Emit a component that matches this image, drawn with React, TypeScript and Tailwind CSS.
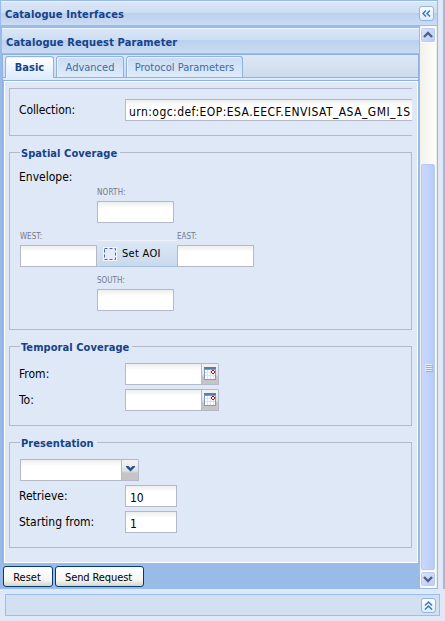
import React from "react";

const line = "border-[#b5b8c8]";
const field =
  "h-[22px] shrink-0 border border-[#b5b8c8] bg-linear-to-b from-[#eceeee] via-white via-30% to-white";
const label = "text-[12px] leading-[14px] text-black whitespace-nowrap";
const tiny = "block h-[9px] text-[8px] leading-[11px] text-[#71798a] whitespace-nowrap";

function Group({ title, className, children }: { title: string; className: string; children: React.ReactNode }) {
  return (
    <fieldset className={`min-w-0 border ${line} w-[403px] pl-[10px] ${className}`}>
      <legend className="h-[13px] pr-[3px] pl-[1px] text-[11px] leading-[15px] font-bold text-[#15428b] whitespace-nowrap tracking-[0.07px]">
        {title}
      </legend>
      {children}
    </fieldset>
  );
}

function Calendar() {
  return (
    <svg width="12" height="13" viewBox="0 0 12 13" shapeRendering="crispEdges" className="mb-px">
      <rect width="12" height="13" fill="#7c9bc9" />
      <rect width="12" height="2" fill="#587eaf" />
      <rect x="1" y="3" width="10" height="9" fill="#fff" />
      <path d="M3.5 3v9M6.5 3v9M9.5 3v9M1 5.5h10M1 8.5h10" stroke="#dfe2ed" />
      <path d="M8 3h2v1h1v2h-1v1h-2v-1h-1v-2h1z" fill="#8e1020" />
      <rect x="8" y="4" width="2" height="2" fill="#fff" />
    </svg>
  );
}

function Trigger({ children }: { children: React.ReactNode }) {
  return (
    <div className="flex h-[22px] w-[17px] items-center justify-center rounded-tr-[2px] border border-l-0 border-[#b5b8c8] bg-linear-to-b from-[#f0f0f0] from-20% via-[#dedfe1] via-55% to-[#c5c5c7] to-65%">
      {children}
    </div>
  );
}

function DateRow({ text }: { text: string }) {
  return (
    <div className="mb-[4px] flex h-[22px]">
      <span className={`${label} -ml-px w-[106px] pt-[4px]`}>{text}</span>
      <div className={`${field} w-[77px]`} />
      <Trigger><Calendar /></Trigger>
    </div>
  );
}

function NumberRow({ text, value, className }: { text: string; value: string; className: string }) {
  return (
    <div className="mb-[4px] flex h-[22px]">
      <span className={`${label} -ml-px w-[106px] pt-[4px]`}><span className={className}>{text}</span></span>
      <div className={`${field} ${label} w-[52px] pt-[5px] pl-[4px]`}>{value}</div>
    </div>
  );
}

function Tab({ text, className }: { text: string; className: string }) {
  return (
    <div className={`h-[21px] rounded-t-[3px] border border-b-0 border-[#8db2e3] bg-linear-to-b from-[#cbdcf1] to-[#deebfb] shadow-[inset_1px_1px_0_#eaf3fd] text-center text-[11px] leading-[21px] whitespace-nowrap text-[#416aa3] ${className}`}>
      {text}
    </div>
  );
}

function Chevrons({ up }: { up?: boolean }) {
  return (
    <div className="flex h-[15px] w-[15px] items-center justify-center rounded-[3px] border border-[#91b5e4] bg-linear-to-b from-white to-[#dcecfb]">
      <svg width="11" height="11" viewBox="0 0 11 11" fill="none" stroke="#3979b5" strokeWidth="1.5">
        <path d={up ? "M2 5.5 5.5 2 9 5.5M2 9.5 5.5 6 9 9.5" : "M5 2.5 2 5.5 5 8.5M9 2.5 6 5.5 9 8.5"} />
      </svg>
    </div>
  );
}

function ScrollButton({ down }: { down?: boolean }) {
  return (
    <div className="flex h-[16px] w-[16px] shrink-0 items-center justify-center rounded-[3px] border border-white bg-linear-to-br from-[#dce4fd] to-[#b7cafa] shadow-[inset_0_0_0_1px_#b9caf3]">
      <svg width="10" height="8" viewBox="0 0 10 8" fill="none" stroke="#4d6185" strokeWidth="2.3">
        <path d={down ? "M1 2 5 6 9 2" : "M1 6 5 2 9 6"} />
      </svg>
    </div>
  );
}

function Button({ text, className }: { text: string; className: string }) {
  return (
    <div className={`h-[21px] rounded-[3px] border border-[#003c74] bg-linear-to-b from-white via-[#f4f4f1] via-70% to-[#d7d5ca] text-center text-[11px] leading-[21px] whitespace-nowrap text-black ${className}`}>
      {text}
    </div>
  );
}

export default function App() {
  return (
    <div className="h-[621px] w-[445px] overflow-hidden bg-[#dfe8f6] font-['DejaVu_Sans_Condensed','DejaVu_Sans',sans-serif] [font-stretch:condensed]">
      <div className="flex h-[589px]">
        <div className="w-[438px] bg-[#99bbe8] pt-px pl-px">
          <header className="flex h-[24px] w-[436px] justify-between border-t border-[#edf4fd] bg-[linear-gradient(#dae6f5_0,#cddef3_11px,#b9d0ee_11px,#cbdcf3_23px)] pr-[3px] pl-[4px]">
            <h1 className="text-[11px] leading-[25px] font-bold whitespace-nowrap tracking-[0.14px] text-[#15428b]">Catalogue Interfaces</h1>
            <div className="pt-[4px]"><Chevrons /></div>
          </header>
          <div className="flex pt-px">
            <main className="w-[419px] pt-[2px] pl-px">
              <header className="h-[25px] w-[417px] border-t border-[#edf4fd] bg-[linear-gradient(#dae6f5_0,#cddef3_11px,#b9d0ee_11px,#cbdcf3_24px)] pl-[4px]">
                <h2 className="text-[11px] leading-[27px] font-bold whitespace-nowrap tracking-[0.14px] text-[#15428b]">Catalogue Request Parameter</h2>
              </header>
              <div className="mt-px w-[417px] border-x border-t border-[#8db2e3]">
                <div className="flex h-[23px] gap-[2px] border-b border-[#8db2e3] bg-linear-to-b from-[#dee8f5] to-[#cddbee] pt-px pl-[2px]">
                  <Tab text="Basic" className="-mb-px h-[22px] w-[49px] from-white to-[#deecfd] font-bold text-[#15428b]" />
                  <Tab text="Advanced" className="w-[68px]" />
                  <Tab text="Protocol Parameters" className="w-[117px]" />
                </div>
                <div className="h-[2px] bg-[#deecfd]" />
              </div>
              <div className="h-px w-[417px] bg-[#8db2e3]" />
              <div className="flex h-[482px] w-[417px] border-l border-[#8db2e3]">
                <div className="ml-px flex w-[414px] flex-col border border-white bg-[#dfe8f6] pt-[6px] pl-[4px]">
                  <section className={`flex h-[48px] w-[403px] shrink-0 border-y border-l ${line} pt-[10px] pl-[10px]`}>
                    <span className={`${label} -ml-px w-[106px] pt-[4px] tracking-[-0.1px]`}>Collection:</span>
                    <div className={`${field} ${label} w-[287px] overflow-hidden border-r-0 pt-[5px] pl-[3px] tracking-[0.45px]`}>
                      urn:ogc:def:EOP:ESA.EECF.ENVISAT_ASA_GMI_1S
                    </div>
                  </section>
                  <Group title="Spatial Coverage" className="mt-[10px] h-[184px] shrink-0">
                    <div className={`${label} -ml-px pt-[11px]`}>Envelope:</div>
                    <div className="mt-[3px] ml-[77px] w-[77px]">
                      <span className={`${tiny} tracking-[0.2px]`}>NORTH:</span>
                      <div className={`${field} mt-[5px]`} />
                    </div>
                    <div className="mt-[8px] flex h-[36px] items-start">
                      <div className="w-[77px]">
                        <span className={tiny}>WEST:</span>
                        <div className={`${field} mt-[5px]`} />
                      </div>
                      <div className="mt-[9px] flex h-[27px] w-[80px] items-center border-t border-b border-t-[#eef3fb] border-b-[#a9bfdf] bg-linear-to-b from-[#dce7f5] to-[#c9daed] pl-[6px]">
                        <svg width="14" height="14" viewBox="0 0 14 14">
                          <rect width="14" height="14" fill="#f4f5ff" />
                          <rect x="1.5" y="1.5" width="11" height="11" fill="#e4edfb" stroke="#5359bd" strokeDasharray="3 2" />
                        </svg>
                        <span className="mt-[2px] ml-[5px] text-[11px] whitespace-nowrap tracking-[0.3px]">Set AOI</span>
                      </div>
                      <div className="w-[77px]">
                        <span className={tiny}>EAST:</span>
                        <div className={`${field} mt-[5px]`} />
                      </div>
                    </div>
                    <div className="mt-[8px] ml-[77px] w-[77px]">
                      <span className={tiny}>SOUTH:</span>
                      <div className={`${field} mt-[5px]`} />
                    </div>
                  </Group>
                  <Group title="Temporal Coverage" className="mt-[10px] h-[86px] shrink-0">
                    <div className="pt-[10px]">
                      <DateRow text="From:" />
                      <DateRow text="To:" />
                    </div>
                  </Group>
                  <Group title="Presentation" className="mt-[10px] h-[112px] shrink-0">
                    <div className="mb-[4px] flex pt-[10px]">
                      <div className={`${field} w-[102px]`} />
                      <Trigger>
                        <svg width="9" height="6" viewBox="0 0 9 6" className="-mt-[2px]"><path d="M0 0h2.5l2 2 2-2H9v1L4.5 5.5 0 1z" fill="#305088" /></svg>
                      </Trigger>
                    </div>
                    <NumberRow text="Retrieve:" value="10" className="" />
                    <NumberRow text="Starting from:" value="1" className="" />
                  </Group>
                </div>
              </div>
              <div className="mt-[3px] ml-px flex gap-[2px]">
                <Button text="Reset" className="w-[50px] pr-[2px]" />
                <Button text="Send Request" className="w-[89px] pr-[2px] tracking-[-0.1px]" />
              </div>
            </main>
            <aside className="flex h-[562px] w-[17px] flex-col items-center gap-px border-r border-[#eeede5] bg-linear-to-r from-[#f2f1ea] to-[#fefefb] pt-px">
              <ScrollButton />
              <div className="h-[119px] shrink-0" />
              <div className="flex h-[406px] w-[14px] shrink-0 flex-col items-center justify-center gap-px rounded-[2px] border border-[#b9c9f2] bg-linear-to-r from-[#cad6fc] via-[#c2d3fc] to-[#b2cbf9]">
                {[0, 1, 2, 3].map((n) => (
                  <div key={n} className="h-px w-[7px] bg-[#e6efff] shadow-[1px_1px_0_#8cb0f8]" />
                ))}
              </div>
              <ScrollButton down />
            </aside>
          </div>
        </div>
        <div className="w-[5px] bg-[#dfe8f6]" />
        <div className="w-[2px] bg-[#99bbe8]" />
      </div>
      <footer className="mt-[5px] ml-[5px] flex h-[22px] w-[435px] items-center justify-end border border-[#99bff2] bg-[#d2e0f2] pr-[3px]">
        <Chevrons up />
      </footer>
    </div>
  );
}
